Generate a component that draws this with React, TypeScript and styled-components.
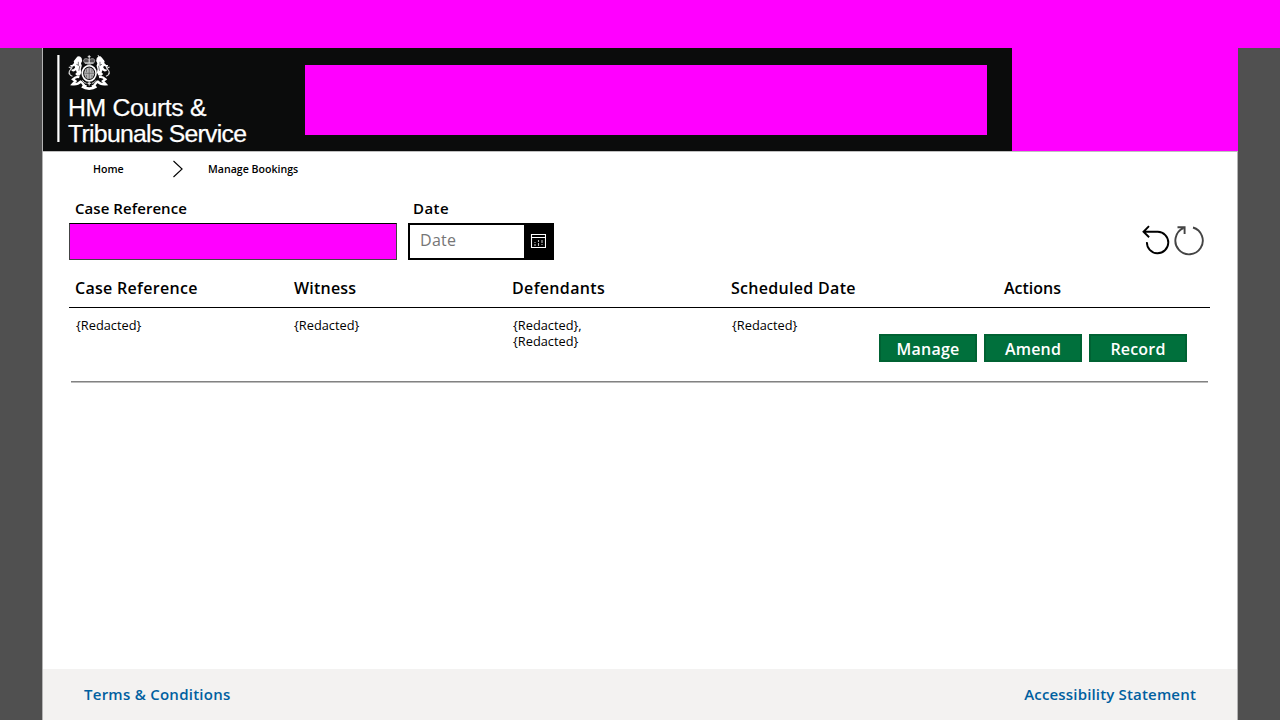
import React from 'react';
import styled, { createGlobalStyle } from 'styled-components';

const GlobalStyle = createGlobalStyle`
  * { box-sizing: border-box; }
  body { margin: 0; background: #505050; overflow: hidden; }
  button, input { font-family: inherit; }
`;

const Page = styled.div`
  height: 720px;
  display: flex;
  flex-direction: column;
  font-family: 'Open Sans', sans-serif;
  color: #000;
`;

const TopMask = styled.div`
  height: 48px;
  flex: none;
  background: #f0f;
`;

const Screen = styled.div`
  flex: 1;
  width: 1196px;
  margin-left: 42px;
  display: flex;
  flex-direction: column;
  background: #fff;
  border-left: 1px solid #b4b4b4;
`;

const Header = styled.header`
  height: 104px;
  flex: none;
  display: flex;
  align-items: flex-start;
  background: #0b0c0c;
  border-bottom: 1px solid #bfbfbf;
`;

const Logo = styled.svg`
  width: 262px;
  height: 103px;
  flex: none;
`;

const TitleMask = styled.div`
  width: 682px;
  height: 70px;
  margin-top: 17px;
  background: #f0f;
`;

const UserMask = styled.div`
  width: 226px;
  height: 103px;
  margin-left: auto;
  background: #f0f;
`;

const Body = styled.main`
  flex: 1;
  display: flex;
  flex-direction: column;
  border-right: 1px solid #b4b4b4;
`;

const Breadcrumbs = styled.nav`
  height: 34px;
  display: flex;
  align-items: center;
  padding-left: 50px;
  font-size: 10.6px;
  font-weight: 600;
`;

const Crumb = styled.span<{ $width?: number }>`
  width: ${p => (p.$width ? `${p.$width}px` : 'auto')};
  white-space: nowrap;
`;

const Chevron = styled.svg`
  width: 12px;
  height: 18px;
  margin-right: 24px;
`;

const Filters = styled.section`
  height: 74px;
  display: flex;
  align-items: flex-start;
  padding: 11px 33px 0 26px;
`;

const Field = styled.div<{ $width: number }>`
  width: ${p => p.$width}px;
  margin-right: 11px;
`;

const Label = styled.label<{ $spacing: number; $indent: number }>`
  display: block;
  height: 26px;
  padding-left: ${p => p.$indent}px;
  font-size: 15px;
  line-height: 23px;
  font-weight: 600;
  letter-spacing: ${p => p.$spacing}px;
`;

const MaskedInput = styled.div`
  width: 328px;
  height: 37px;
  background: #f0f;
  border: 1px solid #444;
  border-top-color: #000;
`;

const DatePicker = styled.div`
  width: 146px;
  height: 37px;
  display: flex;
  border: 2px solid #000;
`;

const DateText = styled.span`
  flex: 1;
  padding-left: 10px;
  font-size: 16px;
  line-height: 31px;
  letter-spacing: 0.3px;
  color: #767676;
`;

const CalendarButton = styled.button`
  width: 28px;
  padding: 0 0 1px;
  border: 0;
  background: #000;
  display: flex;
  align-items: center;
  justify-content: center;
`;

const Tools = styled.svg`
  width: 64px;
  height: 34px;
  margin: 26px 0 0 auto;
`;

const Table = styled.section`
  display: flex;
  flex-direction: column;
`;

const HeadRow = styled.div`
  width: 1141px;
  height: 48px;
  margin-left: 26px;
  display: flex;
  padding-left: 6px;
  border-bottom: 1px solid #000;
  font-size: 16px;
  line-height: 57px;
  font-weight: 600;
`;

const HeadCell = styled.div<{ $width: number; $spacing: number }>`
  width: ${p => p.$width}px;
  flex: none;
  letter-spacing: ${p => p.$spacing}px;
`;

const Row = styled.div`
  width: 1137px;
  height: 74px;
  margin-left: 28px;
  display: flex;
  padding-left: 5px;
  border-bottom: 1px solid #828282;
  box-shadow: 0 1px 0 #bcbcbc;
`;

const Cell = styled.div<{ $width: number }>`
  width: ${p => p.$width}px;
  flex: none;
  padding-top: 9px;
  font-size: 12.8px;
  line-height: 16px;
`;

const Actions = styled.div`
  display: flex;
  gap: 7px;
  padding-top: 26px;
`;

const ActionButton = styled.button`
  width: 98px;
  height: 28px;
  padding: 1px 0 0;
  border: 2px solid #006233;
  background: #00703c;
  color: #fff;
  font-size: 16px;
  line-height: 24px;
  font-weight: 600;
  letter-spacing: 0.2px;
`;

const Footer = styled.footer`
  height: 51px;
  margin-top: auto;
  display: flex;
  justify-content: space-between;
  padding: 0 41px;
  background: #f3f2f1;
`;

const FooterLink = styled.a<{ $spacing: number }>`
  color: #0060a0;
  font-size: 15px;
  line-height: 51px;
  font-weight: 600;
  letter-spacing: ${p => p.$spacing}px;
`;

const CrestSide = () => (
  <g>
    <path d="M8.500 3l1.500-1.500 2.200.2 1.600 1.500.6 3-1.200 2.200.8 2.600-1 3.400.6 3.400-1.500 2.800-3 .4-1.800-1.800 1.600-1.600-.8-2.200-2.200 1.300-2.200-.6-.2-1.500 2-.2 1.700-1.500-.6-2-2.500 1.300-1.900-.8.4-1.300 1.600.2 2-2-.4-1.900z" fill="#fff" />
    <path d="M4.500 21.500C1.500 20.500.4 18 1.600 16c.7-1.400 2-2 2.600-3.800M.8 12.200l2.200 1M.6 19l1.600-.6" fill="none" stroke="#ddd" strokeWidth="1.100" />
    <path d="M11.500 22.300c-3-.8-4.700.4-6.500 2.200l2.600 1.800-3 3.200c4 .4 6.200-.3 8.200-2.700 1.900.6 2.200 2.900 4 4.200l2 .8" fill="none" stroke="#fff" strokeWidth="2.300" />
    <path d="M10.500 7v4M12 11l-1 5M8.500 9.500l2 .8" stroke="#0b0c0c" strokeWidth=".55" fill="none" />
    <path d="M14.500 25.500l2.300 2.400 2 .6" stroke="#ddd" strokeWidth="1" fill="none" />
  </g>
);

const Crest = () => (
  <g transform="translate(25 6.800) scale(.985 1)">
    <CrestSide />
    <g transform="translate(43 0) scale(-1 1)"><CrestSide /></g>
    <path d="M32.500 3.500L30.500.4M33.500 5.600l3 .4" stroke="#fff" strokeWidth="1" />
    <path d="M17 8.300c-2-2.600-1-4.200.9-4.400 1.500-.2 2.700.6 3.600 1.400.9-.8 2.100-1.600 3.600-1.400 1.900.2 2.900 1.800.9 4.400z" fill="#555" stroke="#ccc" strokeWidth=".7" />
    <path d="M21.500.4v8M20 1.900h3M17.200 8.300h8.600" stroke="#eee" strokeWidth="1" />
    <ellipse cx="21.500" cy="18.500" rx="7" ry="7.600" fill="none" stroke="#fff" strokeWidth="1.700" />
    <ellipse cx="21.500" cy="18.500" rx="5.200" ry="5.800" fill="#b4b4b4" />
    <path d="M21.500 12.800v11.400M16.600 18.500h9.800M18.800 14.500v3M24.300 14.500v3M18.800 20v2.800M24.300 20v2.800" stroke="#555" strokeWidth=".7" />
    <path d="M19.500 10.400h4M21.500 26.800v4M19.800 28.600h3.400" stroke="#ddd" strokeWidth="1.200" />
    <path d="M14.200 31.600c2.400 1.700 4 2.200 7.300 2.200s4.900-.5 7.300-2.200" fill="none" stroke="#fff" strokeWidth="2.700" />
  </g>
);

const BrandLogo = () => (
  <Logo viewBox="0 0 262 103">
    <rect x="14.300" y="7" width="2.200" height="87" fill="#fff" />
    <Crest />
    <g fill="#fff" stroke="#fff" strokeWidth=".25" fontFamily="'Liberation Sans', sans-serif" fontSize="24.800">
      <text x="25" y="68.200" textLength="138.500" lengthAdjust="spacing">HM Courts &amp;</text>
      <text x="25" y="93.700" textLength="179" lengthAdjust="spacing">Tribunals Service</text>
    </g>
  </Logo>
);

const CalendarIcon = () => (
  <svg width="16" height="16" viewBox="0 0 16 16" fill="none">
    <path d="M1.500 1.500h14v13h-14zM1.500 4.500h14" stroke="#fff" strokeWidth="1.100" />
    <path d="M5 9v1M5 11v2M8.500 7v2M8.500 10v3M12 7v3M12 11v1" stroke="#bbb" strokeWidth="1.100" />
  </svg>
);

const columns: [string, number, number][] = [
  ['Case Reference', 219, 0.3],
  ['Witness', 218, 0.2],
  ['Defendants', 219, 0.35],
  ['Scheduled Date', 273, 0.3],
  ['Actions', 100, 0],
];

export default function App() {
  return (
    <Page>
      <GlobalStyle />
      <TopMask />
      <Screen>
        <Header>
          <BrandLogo />
          <TitleMask />
          <UserMask />
        </Header>
        <Body>
          <Breadcrumbs>
            <Crumb $width={79}>Home</Crumb>
            <Chevron viewBox="0 0 12 18">
              <path d="M1.500 1l8.600 8-8.600 8" fill="none" stroke="#000" strokeWidth="1.100" />
            </Chevron>
            <Crumb>Manage Bookings</Crumb>
          </Breadcrumbs>
          <Filters>
            <Field $width={328}>
              <Label $spacing={0.06} $indent={6}>Case Reference</Label>
              <MaskedInput />
            </Field>
            <Field $width={146}>
              <Label $spacing={0.45} $indent={5}>Date</Label>
              <DatePicker>
                <DateText>Date</DateText>
                <CalendarButton aria-label="Open calendar"><CalendarIcon /></CalendarButton>
              </DatePicker>
            </Field>
            <Tools viewBox="0 0 64 34" fill="none">
              <path d="M9 3.200L3.500 8.800l5.600 5.500M3.600 8.800h14.200a10.700 10.700 0 1 1-10.900 10.300" stroke="#000" strokeWidth="1.900" />
              <path d="M53 4.500a13.700 13.700 0 1 1-9.700.7M37.500 4.300h7.100v6.600" stroke="#444" strokeWidth="1.900" />
            </Tools>
          </Filters>
          <Table>
            <HeadRow>
              {columns.map(([name, width, spacing]) => (
                <HeadCell key={name} $width={width} $spacing={spacing}>{name}</HeadCell>
              ))}
            </HeadRow>
            <Row>
              <Cell $width={218}>{'{Redacted}'}</Cell>
              <Cell $width={219}>{'{Redacted}'}</Cell>
              <Cell $width={219}>{'{Redacted},'}<br />{'{Redacted}'}</Cell>
              <Cell $width={147}>{'{Redacted}'}</Cell>
              <Actions>
                <ActionButton>Manage</ActionButton>
                <ActionButton>Amend</ActionButton>
                <ActionButton>Record</ActionButton>
              </Actions>
            </Row>
          </Table>
          <Footer>
            <FooterLink $spacing={0.26}>Terms &amp; Conditions</FooterLink>
            <FooterLink $spacing={0.17}>Accessibility Statement</FooterLink>
          </Footer>
        </Body>
      </Screen>
    </Page>
  );
}
